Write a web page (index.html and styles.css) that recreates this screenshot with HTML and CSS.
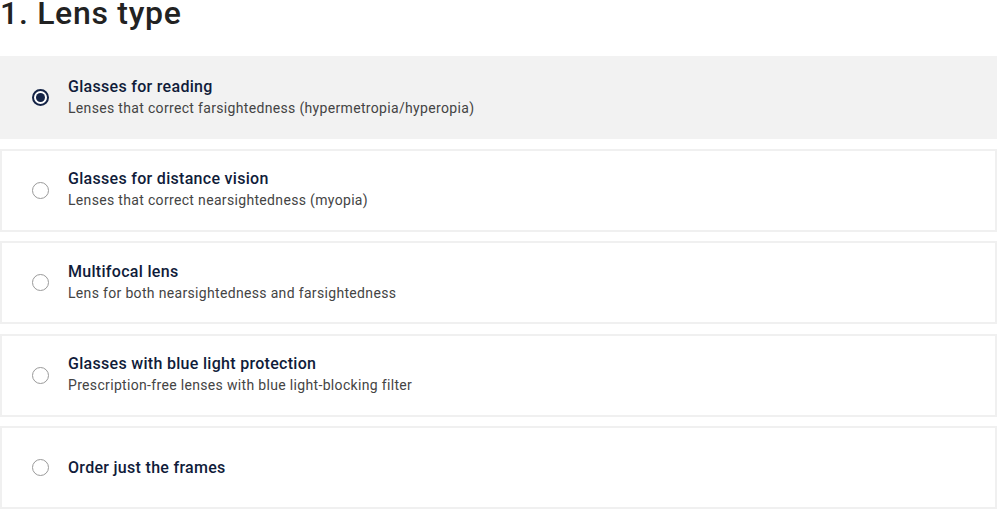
FILE: index.html
```html
<!DOCTYPE html>
<html>
<head>
<meta charset="utf-8">
<link rel="stylesheet" href="styles.css">
</head>
<body>
<div class="page">
  <h1 class="heading">1. Lens type</h1>
  <div class="options">
    <label class="option selected">
      <span class="radio"></span>
      <span class="text">
        <span class="title">Glasses for reading</span>
        <span class="desc">Lenses that correct farsightedness (hypermetropia/hyperopia)</span>
      </span>
    </label>
    <label class="option">
      <span class="radio"></span>
      <span class="text">
        <span class="title">Glasses for distance vision</span>
        <span class="desc">Lenses that correct nearsightedness (myopia)</span>
      </span>
    </label>
    <label class="option">
      <span class="radio"></span>
      <span class="text">
        <span class="title">Multifocal lens</span>
        <span class="desc">Lens for both nearsightedness and farsightedness</span>
      </span>
    </label>
    <label class="option">
      <span class="radio"></span>
      <span class="text">
        <span class="title">Glasses with blue light protection</span>
        <span class="desc">Prescription-free lenses with blue light-blocking filter</span>
      </span>
    </label>
    <label class="option">
      <span class="radio"></span>
      <span class="text">
        <span class="title">Order just the frames</span>
      </span>
    </label>
  </div>
</div>
</body>
</html>
```

FILE: styles.css
```css
* { box-sizing: border-box; }
html, body { margin: 0; padding: 0; background: #fff; }
body { font-family: Roboto, "Liberation Sans", sans-serif; }
.page { width: 997px; }
.heading {
  margin: -6px 0 0 0;
  font-size: 32px;
  line-height: 38px;
  font-weight: 500;
  letter-spacing: 0.7px;
  color: #222;
  height: 62px;
}
.options { display: flex; flex-direction: column; gap: 9.5px; }
.option {
  display: flex;
  align-items: center;
  height: 83px;
  border: 2px solid #f0f0f0;
  background: #fff;
  padding-left: 30px;
}
.option.selected { background: #f2f2f2; border-color: #f2f2f2; }
.radio {
  width: 17px;
  height: 17px;
  border-radius: 50%;
  border: 1.5px solid #9a9a9a;
  background: #fff;
  flex: none;
  margin-right: 19px;
  display: flex;
  align-items: center;
  justify-content: center;
}
.selected .radio { border: 2px solid #152447; }
.selected .radio::after {
  content: "";
  width: 9px;
  height: 9px;
  border-radius: 50%;
  background: #152447;
}
.text { display: flex; flex-direction: column; }
.title { font-size: 16px; line-height: 20px; font-weight: 500; letter-spacing: 0.3px; color: #101c3a; }
.desc { font-size: 14px; line-height: 21px; letter-spacing: 0.33px; color: #444; margin-top: 1px; }
```
